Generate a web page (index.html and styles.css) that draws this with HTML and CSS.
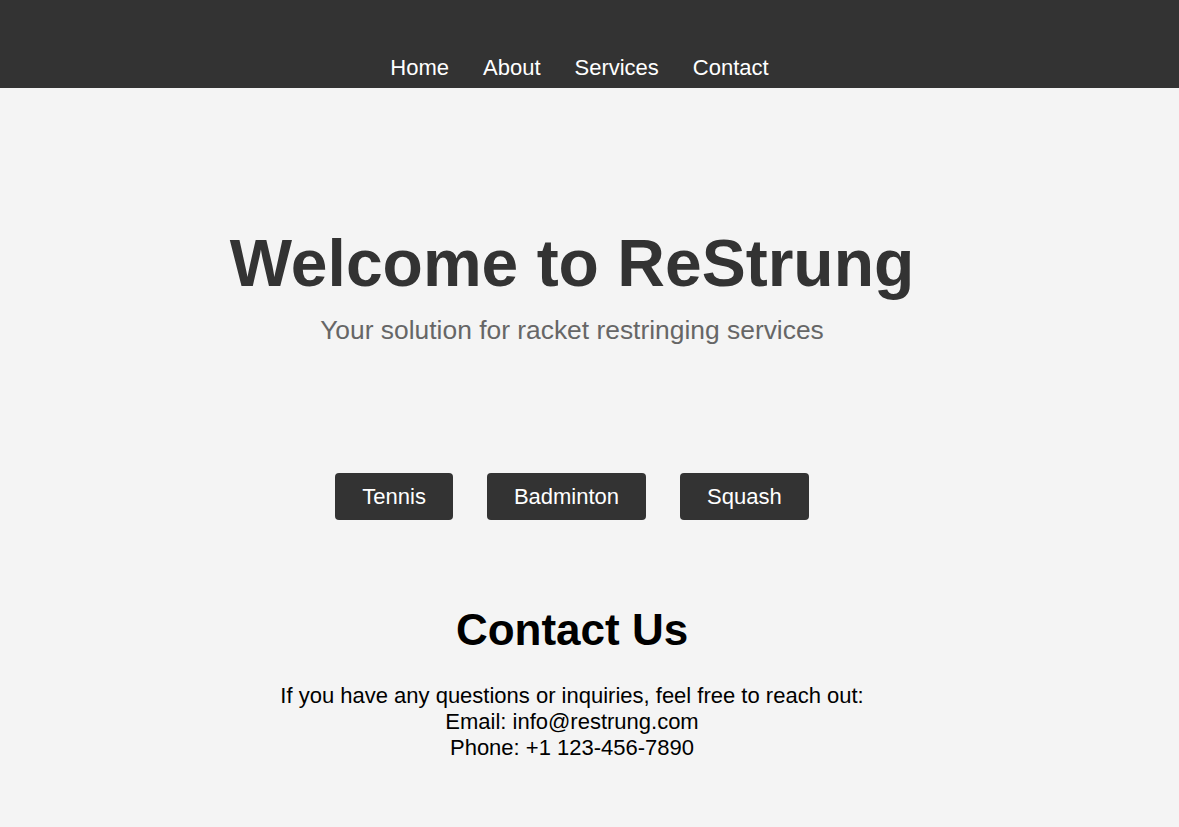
FILE: index.html
```html
<!DOCTYPE html>
<html lang="en">
<head>
<meta charset="utf-8">
<title>ReStrung</title>
<link rel="stylesheet" href="styles.css">
</head>
<body>
<header class="site-header">
  <nav class="nav">
    <a href="#" class="nav-link">Home</a>
    <a href="#" class="nav-link">About</a>
    <a href="#" class="nav-link">Services</a>
    <a href="#" class="nav-link">Contact</a>
  </nav>
</header>
<main class="content">
  <section class="hero">
    <h1 class="hero-title">Welcome to ReStrung</h1>
    <p class="hero-sub">Your solution for racket restringing services</p>
  </section>
  <section class="sports">
    <a href="#" class="btn">Tennis</a>
    <a href="#" class="btn">Badminton</a>
    <a href="#" class="btn">Squash</a>
  </section>
  <section class="contact">
    <h2 class="contact-title">Contact Us</h2>
    <p class="contact-text">If you have any questions or inquiries, feel free to reach out:<br>Email: info@restrung.com<br>Phone: +1 123-456-7890</p>
  </section>
</main>
</body>
</html>
```
FILE: styles.css
```css
* { box-sizing: border-box; }
html, body {
  margin: 0;
  padding: 0;
  background: #f4f4f4;
  font-family: "Liberation Sans", Arial, sans-serif;
}
.site-header {
  background: #333333;
  height: 88px;
  padding: 55px 20px 0 0;
}
.nav {
  display: flex;
  justify-content: center;
  gap: 34px;
}
.nav-link {
  color: #ffffff;
  text-decoration: none;
  font-size: 22px;
  line-height: 25px;
}
.content {
  padding: 0 35px 0 0;
  text-align: center;
}
.hero {
  padding-top: 135px;
}
.hero-title {
  margin: 0;
  font-size: 66px;
  line-height: 80px;
  font-weight: bold;
  color: #333333;
}
.hero-sub {
  margin: 12px 0 0;
  font-size: 26.4px;
  line-height: 30px;
  color: #666666;
}
.sports {
  display: flex;
  justify-content: center;
  gap: 34px;
  margin-top: 128px;
}
.btn {
  display: block;
  background: #333333;
  color: #ffffff;
  text-decoration: none;
  font-size: 22px;
  line-height: 25px;
  padding: 11px 27px;
  border-radius: 4px;
}
.contact {
  margin-top: 85px;
}
.contact-title {
  margin: 0;
  font-size: 44px;
  line-height: 50px;
  font-weight: bold;
  color: #000000;
}
.contact-text {
  margin: 28px 0 0;
  font-size: 22px;
  line-height: 26px;
  color: #000000;
}
```
